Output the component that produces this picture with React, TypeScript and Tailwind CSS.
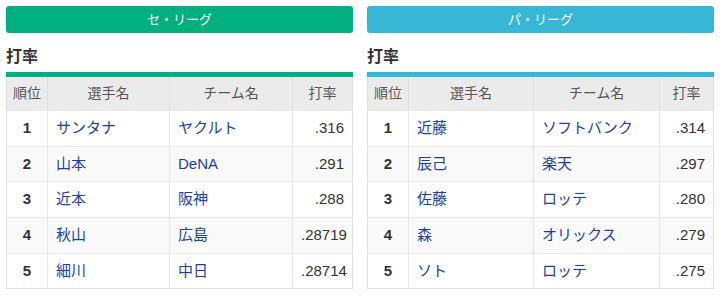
import React from "react";

type Row = { rank: number; name: string; team: string; avg: string };

const CENTRAL: Row[] = [
  { rank: 1, name: "サンタナ", team: "ヤクルト", avg: ".316" },
  { rank: 2, name: "山本", team: "DeNA", avg: ".291" },
  { rank: 3, name: "近本", team: "阪神", avg: ".288" },
  { rank: 4, name: "秋山", team: "広島", avg: ".28719" },
  { rank: 5, name: "細川", team: "中日", avg: ".28714" },
];

const PACIFIC: Row[] = [
  { rank: 1, name: "近藤", team: "ソフトバンク", avg: ".314" },
  { rank: 2, name: "辰己", team: "楽天", avg: ".297" },
  { rank: 3, name: "佐藤", team: "ロッテ", avg: ".280" },
  { rank: 4, name: "森", team: "オリックス", avg: ".279" },
  { rank: 5, name: "ソト", team: "ロッテ", avg: ".275" },
];

const ROW_H = ["h-[36px]", "h-[35px]", "h-[36px]", "h-[36px]", "h-[35px]"];

function LeagueTable({
  label,
  rows,
  pacific,
}: {
  label: string;
  rows: Row[];
  pacific?: boolean;
}) {
  return (
    <div className="flex flex-col">
      {/* League button */}
      <div
        className={`h-[27px] rounded-[3px] flex items-center justify-center text-white text-[13px] ${
          pacific ? "bg-[#37b7d6]" : "bg-[#00b07e]"
        }`}
      >
        {label}
      </div>

      <h2 className="mt-[12px] h-[24px] leading-[24px] text-[16px] font-bold text-[#333]">打率</h2>

      {/* Table */}
      <table
        className={`mt-[3px] w-full border-collapse border-x border-b border-[#e0e0e0] border-t-[5px] table-fixed ${
          pacific ? "border-t-[#37b7d6]" : "border-t-[#00b07e]"
        }`}
      >
        <colgroup>
          <col className="w-[41px]" />
          <col className={pacific ? "w-[125px]" : "w-[122px]"} />
          <col className={pacific ? "w-[126px]" : "w-[123px]"} />
          <col />
        </colgroup>
        <thead>
          <tr className="h-[36px] bg-[#ebebeb] text-[#555] text-[14px]">
            <th className="font-normal border-r border-[#e0e0e0]">順位</th>
            <th className="font-normal border-r border-[#e0e0e0]">選手名</th>
            <th className="font-normal border-r border-[#e0e0e0]">チーム名</th>
            <th className="font-normal">打率</th>
          </tr>
        </thead>
        <tbody className="text-[15px]">
          {rows.map((r, i) => (
            <tr
              key={r.rank}
              className={`${ROW_H[i]} border-t border-[#e8e8e8] ${i % 2 === 1 ? "bg-[#f9f9f9]" : "bg-white"}`}
            >
              <td className="text-center font-bold text-[#333] border-r border-[#e8e8e8]">{r.rank}</td>
              <td className="px-[8px] text-[#1a3db5] border-r border-[#e8e8e8] whitespace-nowrap">{r.name}</td>
              <td className="px-[8px] text-[#1a3db5] border-r border-[#e8e8e8] whitespace-nowrap">{r.team}</td>
              <td className="px-[8px] text-right text-[#333]">{r.avg}</td>
            </tr>
          ))}
        </tbody>
      </table>
    </div>
  );
}

export default function App() {
  return (
    <div
      className="w-[720px] bg-white px-[6px] pt-[6px] grid grid-cols-2 gap-[14px]"
      style={{ fontFamily: '"Liberation Sans", "Noto Sans CJK JP", sans-serif' }}
    >
      <LeagueTable label="セ・リーグ" rows={CENTRAL} />
      <LeagueTable label="パ・リーグ" rows={PACIFIC} pacific />
    </div>
  );
}
